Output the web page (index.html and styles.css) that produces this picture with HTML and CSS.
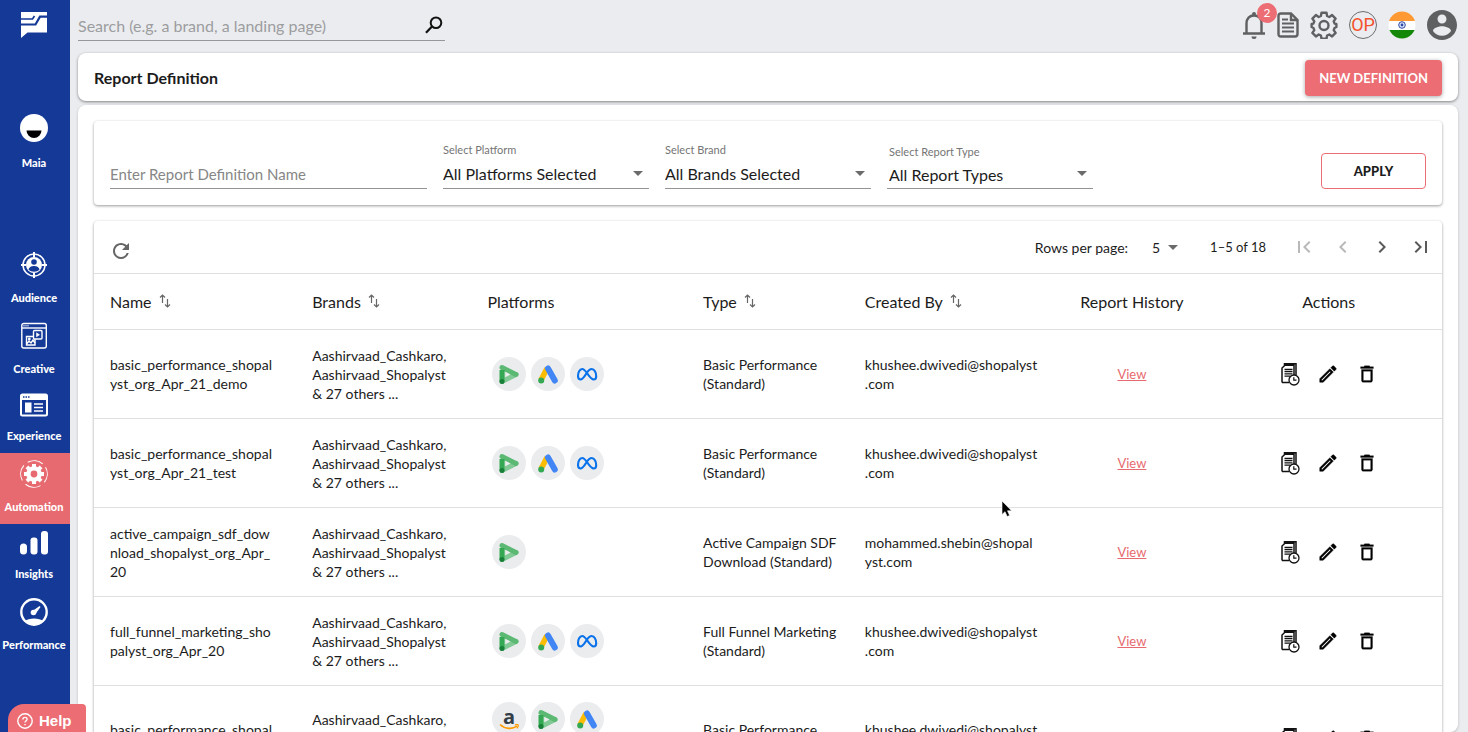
FILE: index.html
```html
<!DOCTYPE html>
<html lang="en">
<head>
<meta charset="utf-8">
<meta name="viewport" content="width=device-width, initial-scale=1">
<title>Report Definition</title>
<link rel="stylesheet" href="styles.css">
</head>
<body>

<!-- shared icons -->
<svg class="sprite" aria-hidden="true">
    <symbol id="sort" viewBox="0 0 12 16">
        <path d="M3.500 10V2M1 4.500L3.500 2L6 4.500M8.500 6V14M6 11.500L8.500 14L11 11.500" fill="none" stroke="#666" stroke-width="1.200"/>
    </symbol>
    <symbol id="caret" viewBox="0 0 10 5"><path d="M0 0h10L5 5z" fill="#6b6b6b"/></symbol>
    <symbol id="dv360" viewBox="0 0 34 34">
        <path d="M10 10.500L24 17.500L10 24.500z" fill="#a8dab5"/>
        <path d="M10 24.500L24 17.500" stroke="#81c995" stroke-width="5" stroke-linecap="round"/>
        <path d="M10 10.500L24 17.500" stroke="#5bb974" stroke-width="5" stroke-linecap="round"/>
        <path d="M10 13V24.500" stroke="#34a853" stroke-width="5"/>
        <path d="M13.300 14.800L18.500 17.500L13.300 20.200z" fill="#ebecee"/>
        <circle cx="10" cy="24.500" r="2.500" fill="#188038"/>
    </symbol>
    <symbol id="gads" viewBox="0 0 34 34">
        <path d="M16 11.500L10 23" stroke="#fbbc04" stroke-width="5.600"/>
        <path d="M17 11.500L23.800 23.500" stroke="#4285f4" stroke-width="6" stroke-linecap="round"/>
        <circle cx="10.200" cy="23.400" r="3" fill="#34a853"/>
    </symbol>
    <symbol id="meta" viewBox="0 0 34 34">
        <path d="M17 16.200C15.300 13.600 14 12 12.200 12C9.500 12 8 15.800 8 19C8 21.200 9 22.500 10.700 22.500C12.700 22.500 14.200 19.800 17 15.500C18.500 13.300 19.900 12 21.700 12C24.400 12 26.200 15.800 26.200 19.200C26.200 21.300 25.200 22.500 23.600 22.500C21.500 22.500 20.300 20.700 17 16.200z" fill="none" stroke="#0a72ea" stroke-width="2.100"/>
    </symbol>
    <symbol id="history" viewBox="0 0 20 24">
        <path d="M4.500 3.500V1.700H16V13M2 20.500V6L5 3.200H14V13M2 20.500H9" fill="none" stroke="#111" stroke-width="1.500"/>
        <path d="M4.500 7.500h8M4.500 9.700h8M4.500 11.900h8M4.500 14.100h6" stroke="#111" stroke-width="1.300"/>
        <circle cx="14" cy="18" r="5" fill="#fff" stroke="#111" stroke-width="1.300"/>
        <path d="M13.800 15.200V18.200H16.500" fill="none" stroke="#111" stroke-width="1.200"/>
    </symbol>
    <symbol id="edit" viewBox="0 0 24 24">
        <path d="M14.060 9.020l.92.92L5.920 19H5v-.92l9.060-9.060M17.660 3c-.25 0-.51.1-.7.29l-1.830 1.830 3.750 3.750 1.830-1.830c.39-.39.39-1.020 0-1.410l-2.340-2.340c-.2-.2-.45-.29-.71-.29zm-3.600 3.190L3 17.250V21h3.750L17.810 9.940l-3.750-3.750z" stroke="#000" stroke-width=".5"/>
    </symbol>
    <symbol id="trash" viewBox="0 0 24 24">
        <path d="M6 19c0 1.100.9 2 2 2h8c1.100 0 2-.9 2-2V7H6v12zM8 9h8v10H8V9zm7.500-5l-1-1h-5l-1 1H5v2h14V4z" stroke="#000" stroke-width=".3"/>
    </symbol>
</svg>

<nav class="sidebar">
    <a href="#" class="logo" aria-label="Home">
        <svg width="26" height="26" viewBox="0 0 26 26">
            <path d="M0 0H26V20.500H6.500L0 26z" fill="#fff"/>
            <path d="M0 7H11.500L13.500 4" stroke="#143996" stroke-width="1.700" fill="none"/>
            <path d="M26 4.700H19L14.500 12.500H0" stroke="#143996" stroke-width="2.200" fill="none"/>
        </svg>
    </a>
    <a href="#" class="item maia">
        <svg width="28" height="28" viewBox="0 0 28 28"><circle cx="14" cy="14" r="14" fill="#fff"/><path d="M6.500 16.500h15a7.500 7.500 0 0 1-15 0z"/></svg>
        <span>Maia</span>
    </a>
    <a href="#" class="item">
        <svg width="28" height="28" viewBox="0 0 28 28" fill="none" stroke="#fff" stroke-width="1.500">
            <circle cx="14" cy="14" r="11"/><circle cx="14" cy="14" r="8" fill="#fff" stroke="none"/>
            <path d="M14 1v5M14 22v5M1 14h5M22 14h5" stroke-width="2"/>
            <circle cx="14" cy="11" r="2.800" fill="#143996" stroke="none"/>
            <path d="M8.500 18.500C9.500 15.500 12 15 14 15S18.500 15.500 19.500 18.500C17 21.500 11 21.500 8.500 18.500z" fill="#143996" stroke="none"/>
        </svg>
        <span>Audience</span>
    </a>
    <a href="#" class="item">
        <svg width="28" height="28" viewBox="0 0 28 28" fill="none" stroke="#fff" stroke-width="1.400">
            <rect x="1.800" y="1.500" width="24.500" height="24.500" rx="2"/><path d="M2 6h24"/>
            <path d="M3.500 3.800h5" stroke-dasharray="1 1"/>
            <path d="M13 14.500H6.500V23h8.500V17"/><rect x="13.500" y="8.500" width="8.500" height="8.500" rx="1"/>
            <path d="M16.500 10.800v4l3-2z" fill="#fff" stroke-width=".6"/>
            <path d="M6.500 22l2.500-3 2 2 2-3 2 3"/><circle cx="9.300" cy="17" r=".7"/>
        </svg>
        <span>Creative</span>
    </a>
    <a href="#" class="item">
        <svg width="28" height="24" viewBox="0 0 28 24">
            <rect x="1" y="1.500" width="26" height="21" rx="1.500" fill="none" stroke="#fff" stroke-width="2"/>
            <path d="M1 1.500h26v5.500H1z" fill="#fff"/><path d="M3 4h7" stroke="#143996" stroke-width="1.400" stroke-dasharray="1.500 1"/>
            <path d="M5 9.500h6.500v10H5z" fill="#fff"/><path d="M14 11h9M14 14.500h9M14 18h9" stroke="#fff" stroke-width="1.600"/>
        </svg>
        <span>Experience</span>
    </a>
    <a href="#" class="item active">
        <svg width="28" height="28" viewBox="0 0 28 28">
            <circle cx="14" cy="14" r="13.300" fill="none" stroke="#fff" stroke-width="1" stroke-dasharray="15.900 5" transform="rotate(-30 14 14)"/>
            <circle cx="14" cy="14" r="5.600" fill="none" stroke="#fff" stroke-width="4.400"/>
            <path d="M14 4v4M14 20v4M4 14h4M20 14h4M6.930 6.930l3 3M18.070 18.070l3 3M6.930 21.070l3-3M18.070 9.930l3-3" stroke="#fff" stroke-width="4"/>
        </svg>
        <span>Automation</span>
    </a>
    <a href="#" class="item">
        <svg width="28" height="24" viewBox="0 0 28 24" fill="#fff"><rect x="0" y="12.500" width="7" height="11" rx="3.500"/><rect x="10.500" y="6.500" width="7" height="17" rx="3"/><rect x="21" y="0" width="7" height="23.500" rx="3"/></svg>
        <span>Insights</span>
    </a>
    <a href="#" class="item">
        <svg width="28" height="28" viewBox="0 0 28 28">
            <circle cx="14" cy="14" r="12.700" fill="none" stroke="#fff" stroke-width="2.400"/>
            <path d="M5 23C8 19.500 20 19.500 23 23C18 28 10 28 5 23z" fill="#fff"/>
            <circle cx="13.500" cy="14.500" r="2.800" fill="#fff"/><path d="M12.500 13L19.500 8L20.500 9L15.500 16z" fill="#fff"/>
        </svg>
        <span>Performance</span>
    </a>
</nav>

<main>
    <header class="topbar">
        <form class="search">
            <input type="search" aria-label="Search" placeholder="Search (e.g. a brand, a landing page)">
            <button type="button" aria-label="Search">
                <svg width="18" height="18" viewBox="0 0 18 18" fill="none" stroke="#111" stroke-width="2"><circle cx="11" cy="6.800" r="5.300"/><path d="M7 10.500L1 16.800" stroke-width="2.200"/></svg>
            </button>
        </form>
        <div class="tools">
            <button type="button" class="bell" aria-label="Notifications">
                <svg width="24" height="28" viewBox="0 0 24 28" fill="none" stroke="#5f6062" stroke-width="2.400">
                    <path d="M1 22.500H23M4.500 22V12.500C4.500 7.500 7.500 4.500 12 4.500S19.500 7.500 19.500 12.500V22"/>
                    <circle cx="12" cy="3" r="2" fill="#5f6062" stroke="none"/><path d="M9.500 25.500h5a2.500 2.500 0 0 1-5 0z" fill="#5f6062" stroke="none"/>
                </svg>
                <span class="badge">2</span>
            </button>
            <button type="button" aria-label="Documents">
                <svg width="22" height="28" viewBox="0 0 22 28" fill="none" stroke="#5f6062" stroke-width="2.400">
                    <path d="M4 2.500H14L20.500 9V23Q20.500 25.500 18 25.500H4Q1.500 25.500 1.500 23V5Q1.500 2.500 4 2.500zM14 2.500V9H20.500"/>
                    <path d="M5 8.500h6M5 12.500h12M5 16.500h12M5 20.500h12" stroke-width="2"/>
                </svg>
            </button>
            <button type="button" aria-label="Settings">
                <svg width="28" height="28" viewBox="0 0 28 28" fill="none" stroke="#5f6062" stroke-width="2.400" stroke-linejoin="round">
                    <path d="M11.500 1.800h5l.6 3.200 2.200 1 2.800-1.900 3.500 3.500-1.900 2.800.9 2.200 1.800.4v3l-1.800.9-.9 2.200 1.900 2.800-3.500 3.500-2.800-1.900-2.200 1-.6 3.200h-5l-.6-3.200-2.200-1-2.800 1.900-3.500-3.500 1.900-2.800-.9-2.200-1.800-.9v-3l1.800-.4.9-2.200-1.900-2.800 3.500-3.500 2.800 1.900 2.200-1z"/>
                    <circle cx="14" cy="14.500" r="4.500"/>
                </svg>
            </button>
            <button type="button" class="org">OP</button>
            <button type="button" aria-label="Country">
                <svg width="28" height="28" viewBox="0 0 28 28">
                    <clipPath id="round"><circle cx="14" cy="14" r="13.500"/></clipPath>
                    <g clip-path="url(#round)"><path d="M0 0h28v10H0z" fill="#f93"/><path d="M0 10h28v9H0z" fill="#fff"/><path d="M0 19h28v9H0z" fill="#138808"/></g>
                    <circle cx="14" cy="14" r="3.300" fill="#dfe5f7" stroke="#2b4aa8" stroke-width="1"/><circle cx="14" cy="14" r="1.400" fill="#2b4aa8"/>
                </svg>
            </button>
            <button type="button" aria-label="Account">
                <svg width="30" height="30" viewBox="2 2 20 20" fill="#5f6062"><path d="M12 2C6.480 2 2 6.480 2 12s4.480 10 10 10 10-4.480 10-10S17.520 2 12 2zm0 3c1.660 0 3 1.340 3 3s-1.340 3-3 3-3-1.340-3-3 1.340-3 3-3zm0 14.200c-2.500 0-4.710-1.280-6-3.220.03-1.990 4-3.080 6-3.080 1.990 0 5.970 1.090 6 3.080-1.290 1.940-3.500 3.220-6 3.220z"/></svg>
            </button>
        </div>
    </header>

    <section class="title-card">
        <h1>Report Definition</h1>
        <button type="button" class="primary">NEW DEFINITION</button>
    </section>

    <section class="content">
        <form class="filters">
            <div class="field name">
                <input type="text" aria-label="Report definition name" placeholder="Enter Report Definition Name">
            </div>
            <div class="field">
                <label for="platform">Select Platform</label>
                <select id="platform"><option>All Platforms Selected</option></select>
                <svg class="caret" width="10" height="5"><use href="#caret"/></svg>
            </div>
            <div class="field">
                <label for="brand">Select Brand</label>
                <select id="brand"><option>All Brands Selected</option></select>
                <svg class="caret" width="10" height="5"><use href="#caret"/></svg>
            </div>
            <div class="field native">
                <label for="type">Select Report Type</label>
                <select id="type"><option>All Report Types</option></select>
                <svg class="caret" width="10" height="5"><use href="#caret"/></svg>
            </div>
            <button type="button" class="apply">APPLY</button>
        </form>

        <div class="table-card">
            <div class="table-bar">
                <button type="button" class="refresh" aria-label="Refresh">
                    <svg width="16" height="16" viewBox="4 4 16 16" fill="#666"><path d="M17.650 6.350C16.200 4.900 14.210 4 12 4c-4.420 0-7.990 3.580-7.990 8s3.570 8 7.990 8c3.730 0 6.840-2.550 7.730-6h-2.080c-.82 2.330-3.040 4-5.650 4-3.310 0-6-2.690-6-6s2.690-6 6-6c1.660 0 3.140.69 4.220 1.780L13 11h7V4l-2.350 2.350z"/></svg>
                </button>
                <label for="rows">Rows per page:</label>
                <div class="rows">
                    <select id="rows"><option>5</option></select>
                    <svg class="caret" width="10" height="5"><use href="#caret"/></svg>
                </div>
                <span class="range">1–5 of 18</span>
                <div class="pager">
                    <button type="button" disabled aria-label="First page"><svg width="24" height="24" viewBox="0 0 24 24"><path d="M18.410 16.590L13.820 12l4.590-4.590L17 6l-6 6 6 6zM6 6h2v12H6z"/></svg></button>
                    <button type="button" disabled aria-label="Previous page"><svg width="24" height="24" viewBox="0 0 24 24"><path d="M15.410 16.590L10.830 12l4.580-4.590L14 6l-6 6 6 6z"/></svg></button>
                    <button type="button" aria-label="Next page"><svg width="24" height="24" viewBox="0 0 24 24"><path d="M8.590 16.590L13.170 12 8.590 7.410 10 6l6 6-6 6z"/></svg></button>
                    <button type="button" aria-label="Last page"><svg width="24" height="24" viewBox="0 0 24 24"><path d="M5.590 7.410L10.180 12l-4.590 4.590L7 18l6-6-6-6zM16 6h2v12h-2z"/></svg></button>
                </div>
            </div>
            <table>
                <thead>
                    <tr>
                        <th class="c-name">Name <svg width="12" height="16"><use href="#sort"/></svg></th>
                        <th class="c-brands">Brands <svg width="12" height="16"><use href="#sort"/></svg></th>
                        <th class="c-platforms">Platforms</th>
                        <th class="c-type">Type <svg width="12" height="16"><use href="#sort"/></svg></th>
                        <th class="c-by">Created By <svg width="12" height="16"><use href="#sort"/></svg></th>
                        <th class="c-history">Report History</th>
                        <th class="c-actions">Actions</th>
                    </tr>
                </thead>
                <tbody>
                    <tr>
                        <td>basic_performance_shopal<br>yst_org_Apr_21_demo</td>
                        <td>Aashirvaad_Cashkaro,<br>Aashirvaad_Shopalyst<br>&amp; 27 others ...</td>
                        <td><div class="chips"><svg><use href="#dv360"/></svg><svg><use href="#gads"/></svg><svg><use href="#meta"/></svg></div></td>
                        <td>Basic Performance<br>(Standard)</td>
                        <td>khushee.dwivedi@shopalyst<br>.com</td>
                        <td class="c-history"><a href="#">View</a></td>
                        <td class="c-actions"><div class="acts"><button type="button" aria-label="Schedule"><svg width="20" height="24"><use href="#history"/></svg></button><button type="button" aria-label="Edit"><svg width="22" height="22"><use href="#edit"/></svg></button><button type="button" aria-label="Delete"><svg width="22" height="22"><use href="#trash"/></svg></button></div></td>
                    </tr>
                    <tr>
                        <td>basic_performance_shopal<br>yst_org_Apr_21_test</td>
                        <td>Aashirvaad_Cashkaro,<br>Aashirvaad_Shopalyst<br>&amp; 27 others ...</td>
                        <td><div class="chips"><svg><use href="#dv360"/></svg><svg><use href="#gads"/></svg><svg><use href="#meta"/></svg></div></td>
                        <td>Basic Performance<br>(Standard)</td>
                        <td>khushee.dwivedi@shopalyst<br>.com</td>
                        <td class="c-history"><a href="#">View</a></td>
                        <td class="c-actions"><div class="acts"><button type="button" aria-label="Schedule"><svg width="20" height="24"><use href="#history"/></svg></button><button type="button" aria-label="Edit"><svg width="22" height="22"><use href="#edit"/></svg></button><button type="button" aria-label="Delete"><svg width="22" height="22"><use href="#trash"/></svg></button></div></td>
                    </tr>
                    <tr>
                        <td>active_campaign_sdf_dow<br>nload_shopalyst_org_Apr_<br>20</td>
                        <td>Aashirvaad_Cashkaro,<br>Aashirvaad_Shopalyst<br>&amp; 27 others ...</td>
                        <td><div class="chips"><svg><use href="#dv360"/></svg></div></td>
                        <td>Active Campaign SDF<br>Download (Standard)</td>
                        <td>mohammed.shebin@shopal<br>yst.com</td>
                        <td class="c-history"><a href="#">View</a></td>
                        <td class="c-actions"><div class="acts"><button type="button" aria-label="Schedule"><svg width="20" height="24"><use href="#history"/></svg></button><button type="button" aria-label="Edit"><svg width="22" height="22"><use href="#edit"/></svg></button><button type="button" aria-label="Delete"><svg width="22" height="22"><use href="#trash"/></svg></button></div></td>
                    </tr>
                    <tr>
                        <td>full_funnel_marketing_sho<br>palyst_org_Apr_20</td>
                        <td>Aashirvaad_Cashkaro,<br>Aashirvaad_Shopalyst<br>&amp; 27 others ...</td>
                        <td><div class="chips"><svg><use href="#dv360"/></svg><svg><use href="#gads"/></svg><svg><use href="#meta"/></svg></div></td>
                        <td>Full Funnel Marketing<br>(Standard)</td>
                        <td>khushee.dwivedi@shopalyst<br>.com</td>
                        <td class="c-history"><a href="#">View</a></td>
                        <td class="c-actions"><div class="acts"><button type="button" aria-label="Schedule"><svg width="20" height="24"><use href="#history"/></svg></button><button type="button" aria-label="Edit"><svg width="22" height="22"><use href="#edit"/></svg></button><button type="button" aria-label="Delete"><svg width="22" height="22"><use href="#trash"/></svg></button></div></td>
                    </tr>
                    <tr>
                        <td>basic_performance_shopal<br>yst_org_Apr_20</td>
                        <td>Aashirvaad_Cashkaro,<br>Aashirvaad_Shopalyst<br>&amp; 27 others ...</td>
                        <td><div class="chips">
                            <svg viewBox="0 0 34 34">
                                <text x="17" y="22" text-anchor="middle" class="amazon">a</text>
                                <path d="M8 22.500C13.500 27.500 20.500 27.200 25 24.200" fill="none" stroke="#f90" stroke-width="1.600"/>
                                <path d="M22.800 22.900C25.200 22.300 26.500 22.700 26.300 23.300C26.200 24.600 25.700 25.600 24.900 26.400" fill="none" stroke="#f90" stroke-width="1.200"/>
                            </svg><svg><use href="#dv360"/></svg><svg><use href="#gads"/></svg><svg><use href="#meta"/></svg></div></td>
                        <td>Basic Performance<br>(Standard)</td>
                        <td>khushee.dwivedi@shopalyst<br>.com</td>
                        <td class="c-history"><a href="#">View</a></td>
                        <td class="c-actions"><div class="acts"><button type="button" aria-label="Schedule"><svg width="20" height="24"><use href="#history"/></svg></button><button type="button" aria-label="Edit"><svg width="22" height="22"><use href="#edit"/></svg></button><button type="button" aria-label="Delete"><svg width="22" height="22"><use href="#trash"/></svg></button></div></td>
                    </tr>
                </tbody>
            </table>
        </div>
    </section>
</main>

<button type="button" class="help">
    <svg width="16" height="16" viewBox="0 0 16 16" fill="none" stroke="#fff" stroke-width="1.400"><circle cx="8" cy="8" r="7.200"/><path d="M5.900 6.400C5.900 3.600 10.200 3.700 10.100 6.300C10 7.800 8 7.800 8 9.600M8 10.900V12.300"/></svg>
    Help
</button>

<svg class="pointer" width="12" height="18" viewBox="0 0 12 18" aria-hidden="true"><path d="M1 1V14.500L4 11.700L6.200 16.500L8.600 15.400L6.500 10.800H10.600z" stroke="#fff" stroke-width=".6"/></svg>

</body>
</html>
```
FILE: styles.css
```css
*{box-sizing:border-box;}
body{margin:0;height:100vh;display:flex;overflow:hidden;background:#ebecef;color:#1c1c1c;font:14px/19px Lato,"Open Sans",sans-serif;}
button{border:0;padding:0;background:none;font:inherit;color:inherit;cursor:pointer;}
input,select{border:0;padding:0;margin:0;background:none;font:inherit;color:inherit;outline:0;appearance:none;}
svg{display:block;flex:none;}
.sprite{position:absolute;width:0;height:0;}

.sidebar{width:70px;flex:none;background:#143996;}
.sidebar a{display:flex;flex-direction:column;align-items:center;color:#fff;text-decoration:none;}
.sidebar .logo{height:107px;padding:12px 2px 0 0;}
.item{padding:7px 2px 9px 0;font-size:11px;line-height:17px;font-weight:900;}
.item span{margin-top:10px;}
.item.maia{height:137px;}
.item.maia span{margin-top:12px;}
.item.active{background:#e76a70;}

main{flex:1;min-width:0;display:flex;flex-direction:column;padding:0 10px 0 8px;}
.topbar{height:53px;flex:none;display:flex;justify-content:space-between;padding-bottom:3px;}
.search{width:367px;height:41px;display:flex;align-items:center;padding:10px 2px 0 0;border-bottom:1px solid #96979a;}
.search input{flex:1;font-size:16px;}
.search input::placeholder{color:#9c9d9f;}
.tools{display:flex;align-items:center;gap:11px;padding-right:1px;}
.bell{position:relative;}
.badge{position:absolute;left:15px;top:-8px;width:20px;height:20px;border-radius:10px;background:#ec6d73;color:#fff;font-size:12px;line-height:20px;}
.org{width:28px;height:28px;border:1px solid #6c6c6c;border-radius:14px;color:#f4522d;font:18px/26px Roboto,sans-serif;}

.title-card{height:48px;flex:none;display:flex;align-items:center;justify-content:space-between;padding:2px 16px 0;background:#fff;border-radius:8px;box-shadow:0 1px 3px rgba(0,0,0,.45);}
h1{margin:0;font-size:16px;line-height:24px;font-weight:700;}
.primary{height:36px;padding:0 14px;border-radius:4px;background:#ec6d73;color:#fff;font-size:13px;font-weight:700;box-shadow:0 1px 4px rgba(0,0,0,.35);}

.content{flex:1;min-height:0;margin-top:4px;padding:16px;overflow:hidden;background:#fff;border-radius:8px;box-shadow:0 1px 3px rgba(0,0,0,.2);}
.filters,.table-card{border-radius:4px;background:#fff;box-shadow:0 1px 3px rgba(0,0,0,.4);}
.filters{height:84px;display:flex;align-items:flex-end;gap:16px;padding:16px;}
.field{position:relative;width:206px;height:48px;display:flex;flex-direction:column;border-bottom:1px solid #949494;}
.field.name{width:317px;justify-content:flex-end;}
.field.name input{height:29px;font-size:15px;}
.field label{font-size:11px;line-height:18px;color:#757575;}
.field select{height:29px;font-size:16px;line-height:24px;}
.field input::placeholder{color:#868686;}
.field.native{padding:2px 0 0 2px;}
.caret{position:absolute;right:6px;bottom:12px;pointer-events:none;}
.apply{width:105px;height:36px;margin-left:auto;border:1px solid #ec6d73;border-radius:4px;font-weight:900;font-size:13px;}

.table-card{margin-top:16px;}
.table-bar{height:52px;display:flex;align-items:center;padding:0 9px 0 19px;}
.refresh{margin-right:auto;padding-top:8px;}
.rows{position:relative;width:26px;margin:0 32px 0 24px;}
.rows select{width:26px;}
.rows .caret{right:0;bottom:7px;}
.range{font-size:13px;}
.pager{display:flex;gap:15px;margin-left:26px;fill:#5a5a5a;}
.pager button:disabled{fill:#b9b9b9;}

table{width:100%;table-layout:fixed;border-collapse:separate;border-spacing:0;}
th,td{padding:0 0 0 16px;text-align:left;border-bottom:1px solid #e0e0e0;}
th{height:57px;border-top:1px solid #e0e0e0;font-size:16px;font-weight:400;white-space:nowrap;}
th svg{display:inline-block;margin-left:3px;vertical-align:-1px;}
td{height:89px;}
.c-name{width:15%;}
.c-brands{width:13%;}
.c-platforms{width:16%;}
.c-type{width:12%;}
.c-by{width:16%;}
.c-history{width:10%;padding:0;text-align:center;}
.c-actions{width:18%;text-align:center;}
td a{color:#e76a70;font-size:13px;}
.chips{display:flex;flex-wrap:wrap;gap:5px;width:121px;margin-left:5px;}
.chips svg{width:34px;height:34px;border-radius:17px;background:#ebecee;}
.amazon{font:700 20px "Open Sans",sans-serif;fill:#333e48;}
tr:last-child td{height:106px;}
.acts{display:flex;justify-content:center;align-items:center;gap:17px;}

.help{position:fixed;left:8px;bottom:-6px;width:78px;height:34px;display:flex;align-items:center;gap:6px;padding:0 0 0 9px;border-radius:16px 4px 0 0;background:#ec6d73;color:#fff;font:700 15px/20px "Liberation Sans",sans-serif;}
.pointer{position:fixed;left:1001px;top:500px;}
```
